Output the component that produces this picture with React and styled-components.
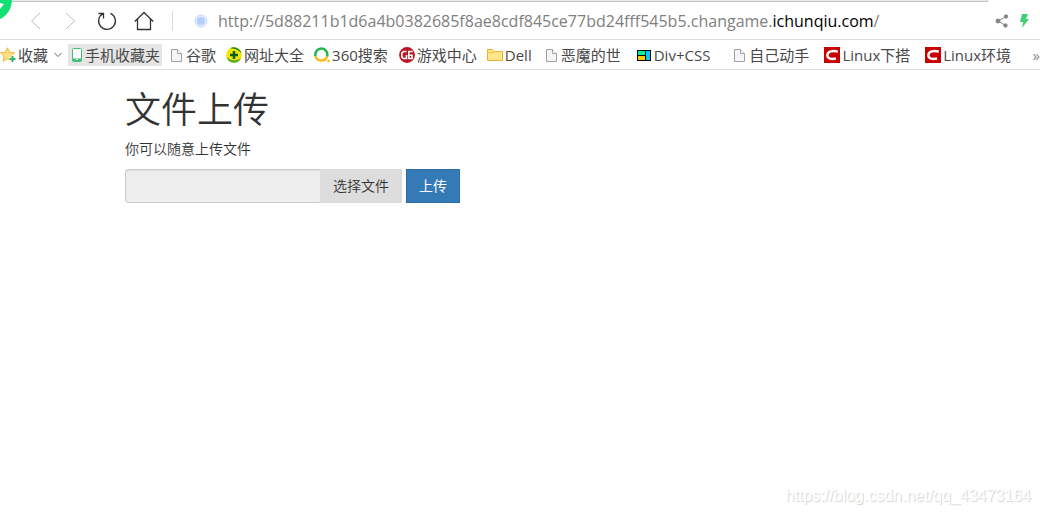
import React, { useRef, useState } from 'react'
import styled, { createGlobalStyle } from 'styled-components'

const GlobalStyle = createGlobalStyle`
  * {
    box-sizing: border-box;
  }

  body {
    margin: 0;
    background: #fff;
    color: #333;
    font-family: "Open Sans", "Noto Sans CJK SC", sans-serif;
  }
`

const Window = styled.div`
  position: relative;
  min-height: 100vh;
  overflow: hidden;
`

const TabStrip = styled.div`
  height: 2px;
  margin-right: 52px;
  background: #e9e9e9;
  border-bottom: 1px solid #c4c4c4;
  border-right: 1px solid #c4c4c4;
`

const Badge = styled.svg`
  position: absolute;
  left: 0;
  top: 0;
`

const Toolbar = styled.div`
  display: flex;
  align-items: center;
  height: 38px;
  padding: 0 10px 0 28px;
  border-bottom: 1px solid #dedede;
`

const NavButton = styled.button`
  display: flex;
  align-items: center;
  justify-content: center;
  width: 16px;
  height: 24px;
  margin-right: ${props => props.$gap || 18}px;
  padding: 0;
  border: none;
  background: none;

  svg {
    flex: none;
  }
`

const Divider = styled.div`
  width: 1px;
  height: 20px;
  margin-right: 21px;
  background: #d9d9d9;
`

const SiteIcon = styled.svg`
  flex: none;
  margin-right: 10px;
`

const Address = styled.div`
  flex: 1;
  color: #808080;
  font-size: 16px;
  line-height: 24px;
  white-space: nowrap;

  b {
    color: #000;
    font-weight: 400;
  }
`

const Bookmarks = styled.nav`
  display: flex;
  align-items: center;
  gap: 10px;
  height: 30px;
  border-bottom: 1px solid #dedede;
  white-space: nowrap;
`

const Bookmark = styled.a`
  display: flex;
  align-items: center;
  gap: 2px;
  height: 22px;
  margin-right: ${props => props.$space || 0}px;
  padding: ${props => props.$active ? '0 2px' : '0'};
  background: ${props => props.$active ? '#e5e5e5' : 'none'};
  color: #484848;
  font-size: 15px;
  line-height: 20px;
  text-decoration: none;

  svg {
    flex: none;
  }
`

const Chevron = styled.svg`
  margin-left: 4px;
`

const More = styled.button`
  margin-left: auto;
  padding: 0;
  border: none;
  background: none;
  color: #888;
  font-family: inherit;
  font-size: 15px;
  line-height: 22px;
`

const Container = styled.main`
  padding: 20px 125px 0;
  font-size: 14px;
  font-weight: 350;
  line-height: 20px;
`

const Title = styled.h1`
  margin: 0 0 10px;
  font-size: 36px;
  font-weight: 350;
  line-height: 39px;
`

const Intro = styled.p`
  margin: 0 0 10px;
`

const UploadForm = styled.form`
  display: flex;
  gap: 4px;
`

const FileGroup = styled.div`
  display: flex;
`

const FileName = styled.input`
  width: 195px;
  height: 34px;
  padding: 6px 12px;
  border: 1px solid #ccc;
  border-right: none;
  border-radius: 4px 0 0 4px;
  background: #eee;
  box-shadow: inset 0 1px 1px rgba(0, 0, 0, 0.075);
  color: #555;
  font: inherit;
`

const Button = styled.button`
  height: 34px;
  padding: 6px 12px;
  border: 1px solid ${props => props.$primary ? '#2e6da4' : '#ddd'};
  background: ${props => props.$primary ? '#337ab7' : '#ddd'};
  color: ${props => props.$primary ? '#fff' : '#333'};
  font: inherit;
  font-weight: ${props => props.$primary ? 400 : 350};
  cursor: pointer;
`

const Watermark = styled.div`
  position: absolute;
  right: 9px;
  bottom: 8px;
  color: #fff;
  font-family: "Liberation Sans", sans-serif;
  font-size: 16px;
  line-height: 20px;
  text-shadow: 1px 1px 1px #d0d0d0;
`

const StarIcon = () => (
  <svg width="16" height="16" viewBox="0 0 16 16">
    <path d="M7.5 .8l2.1 4.4 4.9.6-3.6 3.4.9 5-4.3-2.4-4.4 2.4.9-5L.5 5.8l4.9-.6z" fill="#ffdf80" stroke="#f2b632" strokeLinejoin="round" />
    <path d="M12.500 8.500v7M9 12h7" stroke="#fff" strokeWidth="3.500" />
    <path d="M12.500 9v6M9.500 12h6" stroke="#35b46b" strokeWidth="2" />
  </svg>
)

const PhoneIcon = () => (
  <svg width="13" height="16" viewBox="0 0 13 16">
    <rect x="2.500" y="1.500" width="9" height="13" rx="1" fill="#fff" stroke="#3fbf72" />
    <path d="M3 11.500h8V14H3z" fill="#3fbf72" />
    <path d="M6 12h2v1H6z" fill="#fff" />
  </svg>
)

const PageIcon = () => (
  <svg width="16" height="16" viewBox="0 0 16 16">
    <path d="M3.500 2.500h6l4 4v8h-10z" fill="#f5f5f5" stroke="#a0a0a0" />
    <path d="M9.500 2.500v4h4" fill="#fff" stroke="#a0a0a0" />
  </svg>
)

const SitesIcon = () => (
  <svg width="16" height="16" viewBox="0 0 16 16">
    <circle cx="8" cy="8" r="7.800" fill="#f8e500" />
    <path d="M4 1.300A7.800 7.800 0 0 1 15.500 6.500C13 3 9 1.500 4 1.300z" fill="#17852b" />
    <path d="M15 11.500A7.800 7.800 0 0 1 .5 9.500c3 4 8 5 14.500 2z" fill="#4fae22" />
    <path d="M8 4v8M4 8h8" stroke="#075f1c" strokeWidth="2.500" />
  </svg>
)

const SearchIcon = () => (
  <svg width="16" height="16" viewBox="0 0 16 16" fill="none" strokeWidth="2.500">
    <path d="M1.500 9A6 6 0 1 1 13 9.500" stroke="#22b84d" />
    <path d="M1.500 9A6 6 0 0 0 13 9.500" stroke="#ffb91a" />
    <circle cx="14.500" cy="14" r="1.300" fill="#ffb91a" />
  </svg>
)

const GameIcon = () => (
  <svg width="16" height="16" viewBox="0 0 16 16">
    <circle cx="8" cy="8" r="7.900" fill="#b91422" />
    <path d="M7.500 4.500H4.500L2.800 6.200v3.600L4.500 11.500h3V8M13.800 4.500H9.800V11.500h3.200V8.300h-2.500" fill="none" stroke="#fff" strokeWidth="1.600" />
  </svg>
)

const FolderIcon = () => (
  <svg width="16" height="16" viewBox="0 0 16 16">
    <path d="M.5 13.500v-11h5l2 2h8v9z" fill="#ffe88c" stroke="#e9b32c" />
    <path d="M1 5.500h6l1.500-1" fill="none" stroke="#f1c34a" />
  </svg>
)

const LayoutIcon = () => (
  <svg width="16" height="16" viewBox="0 0 16 16">
    <path d="M1 3h14v11H1z" fill="#000" />
    <path d="M2 4h7v4H2z" fill="#00f0a0" />
    <path d="M2 9h7v4H2z" fill="#ffc800" />
    <path d="M10 4h4v9h-4z" fill="#00c8ff" />
  </svg>
)

const CIcon = () => (
  <svg width="16" height="16" viewBox="0 0 16 16">
    <path d="M0 0h16v16H0z" fill="#c80000" />
    <path d="M13.800 4.700C9 3.200 3.500 4.400 3.300 8.300c-.1 3.500 4.500 4.200 8.700 3.200" fill="none" stroke="#fff" strokeWidth="2.400" />
  </svg>
)

const bookmarks = [
  { label: '谷歌', icon: PageIcon },
  { label: '网址大全', icon: SitesIcon },
  { label: '360搜索', icon: SearchIcon, space: 1 },
  { label: '游戏中心', icon: GameIcon },
  { label: 'Dell', icon: FolderIcon, space: 1 },
  { label: '恶魔的世', icon: PageIcon, space: 5 },
  { label: 'Div+CSS', icon: LayoutIcon, space: 11 },
  { label: '自己动手', icon: PageIcon, space: 5 },
  { label: 'Linux下搭', icon: CIcon, space: 5 },
  { label: 'Linux环境', icon: CIcon },
]

const App = () => {
  const [fileName, setFileName] = useState('')
  const picker = useRef(null)

  const onFileChange = (e) => {
    setFileName(e.target.files.length ? e.target.files[0].name : '')
  }

  const renderBookmarks = () => (
    bookmarks.map(({ label, icon: Icon, space }) => (
      <Bookmark key={label} href="#" $space={space}><Icon />{label}</Bookmark>
    ))
  )

  return (
    <Window>
      <GlobalStyle />
      <TabStrip />
      <Badge width="13" height="20" viewBox="0 0 13 20">
        <path d="M0 0h12C11.500 9 7 16 0 19z" fill="#12df72" />
        <path d="M0 3l4 1L0 9z" fill="#fff" />
      </Badge>
      <Toolbar>
        <NavButton aria-label="Back">
          <svg width="16" height="18" viewBox="0 0 16 18" fill="none" stroke="#bbb">
            <path d="M12 1L3.500 9l8.500 8" />
          </svg>
        </NavButton>
        <NavButton aria-label="Forward" $gap={21}>
          <svg width="16" height="18" viewBox="0 0 16 18" fill="none" stroke="#bbb">
            <path d="M4 1l8.500 8L4 17" />
          </svg>
        </NavButton>
        <NavButton aria-label="Reload" $gap={21}>
          <svg width="20" height="20" viewBox="0 0 20 20" fill="none" stroke="#333" strokeWidth="1.300">
            <path d="M13.500 2.300A8.400 8.400 0 1 1 6 2.600M1.500 2.500H6.500V7.500" />
          </svg>
        </NavButton>
        <NavButton aria-label="Home" $gap={20}>
          <svg width="20" height="20" viewBox="0 0 20 20" fill="none" stroke="#333" strokeWidth="1.300">
            <path d="M.8 10.500L10 1.500l9.200 9M3.500 8v10.500h13V8" />
          </svg>
        </NavButton>
        <Divider />
        <SiteIcon width="14" height="14" viewBox="0 0 14 14">
          <circle cx="7" cy="7" r="6" fill="#e5edff" stroke="#c6d8fb" />
          <circle cx="7" cy="7" r="4" fill="#b4cefb" />
        </SiteIcon>
        <Address>
          http://5d88211b1d6a4b0382685f8ae8cdf845ce77bd24fff545b5.changame.<b>ichunqiu.com</b>/
        </Address>
        <NavButton aria-label="Share" $gap={6}>
          <svg width="14" height="14" viewBox="0 0 14 14" fill="#858585" stroke="#858585">
            <path d="M11 2.500L3 7l7.500 4.500" fill="none" />
            <circle cx="11" cy="2.500" r="1.700" />
            <circle cx="3" cy="7" r="2" />
            <circle cx="10.500" cy="11.500" r="1.700" />
          </svg>
        </NavButton>
        <NavButton aria-label="Speed mode" $gap={-2}>
          <svg width="12" height="16" viewBox="0 0 12 16">
            <path d="M4 1h6L8 6h3L4 15l1.200-6H2z" fill="#42cf76" />
          </svg>
        </NavButton>
      </Toolbar>
      <Bookmarks>
        <Bookmark href="#" $space={-4}>
          <StarIcon />收藏
          <Chevron width="8" height="6" viewBox="0 0 8 6" fill="none" stroke="#666">
            <path d="M.5 1L4 4.500 7.500 1" />
          </Chevron>
        </Bookmark>
        <Bookmark href="#" $active $space={-4}><PhoneIcon />手机收藏夹</Bookmark>
        {renderBookmarks()}
        <More aria-label="More bookmarks">»</More>
      </Bookmarks>
      <Container>
        <Title>文件上传</Title>
        <Intro>你可以随意上传文件</Intro>
        <UploadForm onSubmit={e => e.preventDefault()}>
          <FileGroup>
            <FileName type="text" aria-label="文件名" value={fileName} readOnly />
            <input ref={picker} type="file" aria-label="选择文件" hidden onChange={onFileChange} />
            <Button type="button" onClick={() => picker.current.click()}>选择文件</Button>
          </FileGroup>
          <Button type="submit" $primary>上传</Button>
        </UploadForm>
      </Container>
      <Watermark>https://blog.csdn.net/qq_43473164</Watermark>
    </Window>
  )
}

export default App
